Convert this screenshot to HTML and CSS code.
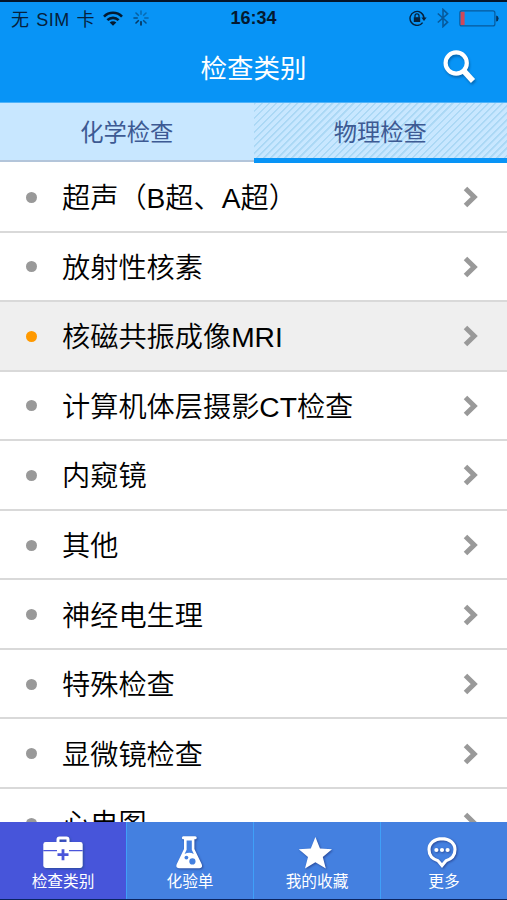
FILE: index.html
```html
<!DOCTYPE html>
<html lang="zh-CN">
<head>
    <meta charset="UTF-8">
    <meta name="viewport" content="width=device-width, initial-scale=1.0">
    <title>检查类别</title>
    <link rel="stylesheet" href="styles.css">
</head>
<body>
    <header>
        <div class="status">
            <div class="status-left">
                <span class="carrier">无 SIM 卡</span>
                <svg class="wifi" width="20" height="15" viewBox="0 0 20 15">
                    <g fill="none" stroke="currentColor" stroke-width="2.6">
                        <path d="M1 5.6a12.6 12.6 0 0 1 18 0"/>
                        <path d="M4.4 9.2a7.9 7.9 0 0 1 11.2 0"/>
                    </g>
                    <path d="M10 14.8L6.7 11.6a4.6 4.6 0 0 1 6.6 0z" fill="currentColor"/>
                </svg>
                <svg class="spinner" width="16" height="16" viewBox="-8 -8 16 16" stroke="currentColor" stroke-width="1.6" stroke-linecap="round">
                    <path d="M0-3.8V-7" opacity=".35"/>
                    <path d="M2.7-2.7L5-5" opacity=".35"/>
                    <path d="M3.8 0H7" opacity=".4"/>
                    <path d="M2.7 2.7L5 5" opacity=".6"/>
                    <path d="M0 3.8V7" opacity=".9"/>
                    <path d="M-2.7 2.7L-5 5" opacity=".8"/>
                    <path d="M-3.8 0H-7" opacity=".6"/>
                    <path d="M-2.7-2.7L-5-5" opacity=".45"/>
                </svg>
            </div>
            <time>16:34</time>
            <div class="status-right">
                <svg class="lock" width="18" height="16" viewBox="0 0 18 16">
                    <path d="M13.6 12.6A7 7 0 1 1 15 8" fill="none" stroke="currentColor" stroke-width="1.4"/>
                    <path d="M12.4 7.6H17.6L15 11z" fill="currentColor"/>
                    <rect x="4.8" y="7.2" width="6.4" height="4.8" fill="currentColor"/>
                    <path d="M6 7.4V5.8a2 2 0 0 1 4 0V7.4" fill="none" stroke="currentColor" stroke-width="1.3"/>
                </svg>
                <svg class="bluetooth" width="12" height="20" viewBox="0 0 12 20">
                    <path d="M.8 5.5L10.6 14.2 6 18.6V1.4L10.6 5.8.8 14.5" fill="none" stroke="currentColor" stroke-width="1.6"/>
                </svg>
                <svg class="battery" width="40" height="17" viewBox="0 0 40 17">
                    <rect x=".9" y=".9" width="35" height="15" rx="2" fill="none" stroke="#075a9c" stroke-width="1.2"/>
                    <rect x="1.6" y="1.8" width="4" height="13.2" fill="#d0485a"/>
                    <path d="M37.2 5.4q2.4.6 2.4 3.1t-2.4 3.1z" fill="#073158"/>
                </svg>
            </div>
        </div>
        <div class="title-bar">
            <h1>检查类别</h1>
            <svg class="search" width="36" height="38" viewBox="0 0 36 38">
                <circle cx="14.2" cy="14" r="10.6" fill="none" stroke="#fff" stroke-width="4.2"/>
                <path d="M21 21L31 32" stroke="#fff" stroke-width="5.6"/>
            </svg>
        </div>
    </header>

    <nav class="tabs">
        <a class="tab">化学检查</a>
        <a class="tab active">物理检查</a>
    </nav>

    <main>
        <ul class="list">
            <li><i class="dot"></i><span>超声（B超、A超）</span><svg class="arrow" viewBox="0 0 16 22"><path d="M2.5 2.5L11.2 11 2.5 19.5"/></svg></li>
            <li><i class="dot"></i><span>放射性核素</span><svg class="arrow" viewBox="0 0 16 22"><path d="M2.5 2.5L11.2 11 2.5 19.5"/></svg></li>
            <li class="selected"><i class="dot"></i><span>核磁共振成像MRI</span><svg class="arrow" viewBox="0 0 16 22"><path d="M2.5 2.5L11.2 11 2.5 19.5"/></svg></li>
            <li><i class="dot"></i><span>计算机体层摄影CT检查</span><svg class="arrow" viewBox="0 0 16 22"><path d="M2.5 2.5L11.2 11 2.5 19.5"/></svg></li>
            <li><i class="dot"></i><span>内窥镜</span><svg class="arrow" viewBox="0 0 16 22"><path d="M2.5 2.5L11.2 11 2.5 19.5"/></svg></li>
            <li><i class="dot"></i><span>其他</span><svg class="arrow" viewBox="0 0 16 22"><path d="M2.5 2.5L11.2 11 2.5 19.5"/></svg></li>
            <li><i class="dot"></i><span>神经电生理</span><svg class="arrow" viewBox="0 0 16 22"><path d="M2.5 2.5L11.2 11 2.5 19.5"/></svg></li>
            <li><i class="dot"></i><span>特殊检查</span><svg class="arrow" viewBox="0 0 16 22"><path d="M2.5 2.5L11.2 11 2.5 19.5"/></svg></li>
            <li><i class="dot"></i><span>显微镜检查</span><svg class="arrow" viewBox="0 0 16 22"><path d="M2.5 2.5L11.2 11 2.5 19.5"/></svg></li>
            <li><i class="dot"></i><span>心电图</span><svg class="arrow" viewBox="0 0 16 22"><path d="M2.5 2.5L11.2 11 2.5 19.5"/></svg></li>
        </ul>
    </main>

    <footer>
        <a class="item current">
            <svg width="40" height="34" viewBox="0 0 40 34">
                <path d="M15 7V3.6Q15 2 16.6 2H23.4Q25 2 25 3.6V7" fill="none" stroke="#fff" stroke-width="3"/>
                <rect x=".3" y="6" width="39.4" height="26" rx="2.4" fill="#fff"/>
                <path d="M.3 14.6H14M26 14.6H39.7" stroke="#4a55da" stroke-width="1.4"/>
                <path d="M20 13.2V24.2M14.5 18.7H25.5" stroke="#4a55da" stroke-width="2.8"/>
            </svg>
            <span>检查类别</span>
        </a>
        <a class="item">
            <svg width="40" height="34" viewBox="0 0 40 34">
                <path d="M13.4 1.7H25.2" stroke="#fff" stroke-width="3" stroke-linecap="round"/>
                <path d="M14 2H24.4V13L31.6 28Q33.2 32.2 29.2 32.2H9.2Q5.2 32.2 6.8 28L14 13z" fill="#fff"/>
                <path d="M16.6 4.4H21.8V13.8L23.8 18Q19.2 15.4 14.6 18L16.6 13.8z" fill="#4480e0"/>
                <circle cx="16.4" cy="21.6" r="1.9" fill="#4480e0"/>
                <circle cx="22.4" cy="25.4" r="3.1" fill="#4480e0"/>
            </svg>
            <span>化验单</span>
        </a>
        <a class="item">
            <svg width="40" height="34" viewBox="0 0 40 34">
                <path d="M18.4 1L23 12.4 35 13.2 25.8 21 28.8 32.6 18.4 26.2 8 32.6 11 21 1.8 13.2 13.8 12.4z" fill="#fff"/>
            </svg>
            <span>我的收藏</span>
        </a>
        <a class="item">
            <svg width="40" height="34" viewBox="0 0 40 34">
                <path d="M18 2.6C10.4 2.6 5 7.4 5 13.6 5 19.2 8.6 23.2 14 24.8L18 29.6 22 24.8C27.4 23.2 31 19.2 31 13.6 31 7.4 25.6 2.6 18 2.6z" fill="none" stroke="#fff" stroke-width="3.1"/>
                <g fill="#fff">
                    <circle cx="12.4" cy="14" r="2.1"/>
                    <circle cx="18" cy="14" r="2.1"/>
                    <circle cx="23.6" cy="14" r="2.1"/>
                </g>
            </svg>
            <span>更多</span>
        </a>
    </footer>
</body>
</html>
```
FILE: styles.css
```css
* {
    box-sizing: border-box;
    padding: 0;
    margin: 0;
}

:root {
    --blue: #0894f6;
    --bar: #4480e0;
    --bar-current: #4755da;
    --tab: #c8e7ff;
    --tab-text: #3d5a93;
    --line: #d9d9d9;
}

body {
    height: 900px;
    display: flex;
    flex-direction: column;
    overflow: hidden;
    background-color: white;
    font-family: "Liberation Sans", "Noto Sans CJK SC", sans-serif;
}

header {
    height: 102px;
    flex: none;
    border-top: 2px solid #04152a;
    background-color: var(--blue);
}

.status {
    display: grid;
    grid-template-columns: 1fr auto 1fr;
    align-items: center;
    height: 32px;
    padding: 0 9px 0 11px;
    color: #06213c;
}

.status-left, .status-right {
    display: flex;
    align-items: center;
}

.status-right {
    justify-content: flex-end;
    margin-right: -1px;
}

.carrier {
    font-size: 18px;
    letter-spacing: 0.5px;
    word-spacing: 1.3px;
    white-space: nowrap;
}

.wifi {
    margin-left: 8px;
    color: #041a30;
}

.spinner {
    margin-left: 10px;
}

time {
    margin: 0 1px 0 -1px;
    color: #041a30;
    font-size: 18px;
    font-weight: bold;
}

.bluetooth {
    margin: 0 10px;
    color: #075a9c;
}

.title-bar {
    display: grid;
    grid-template-columns: 1fr auto 1fr;
    align-items: center;
    height: 68px;
    padding-right: 29px;
    padding-left: 29px;
}

h1 {
    grid-column: 2;
    padding-bottom: 4px;
    color: white;
    font-size: 26.5px;
    font-weight: 400;
}

.search {
    justify-self: end;
    filter: drop-shadow(1px 2px 1px #0569b5);
}

.tabs {
    display: flex;
    flex: none;
    align-items: flex-start;
    height: 61px;
}

.tab {
    flex: 1;
    height: 60px;
    border-top: 1px solid #4fb3fa;
    border-bottom: 2px solid #b3c5da;
    background-color: var(--tab);
    color: var(--tab-text);
    font-size: 23.3px;
    font-weight: 400;
    line-height: 60px;
    text-align: center;
}

.tab.active {
    height: 61px;
    border-bottom: 5px solid var(--blue);
    background-image: repeating-linear-gradient(135deg, #abd8f5 0 1.2px, transparent 2px 5px);
}

main {
    flex: 1;
    overflow: hidden;
}

.list {
    list-style: none;
}

.list li {
    display: flex;
    align-items: center;
    height: 69.55px;
    padding: 1px 28px 0 26px;
    border-bottom: 2px solid var(--line);
    font-size: 28.2px;
    font-weight: 350;
}

.list span {
    flex: 1;
    margin-left: 25px;
    padding-top: 2px;
    line-height: 40px;
}

.dot {
    width: 11px;
    height: 11px;
    border-radius: 50%;
    background-color: #999;
}

.selected {
    background-color: #efefef;
}

.selected .dot {
    background-color: #ff9900;
}

.arrow {
    width: 16px;
    height: 22px;
    fill: none;
    stroke: #999;
    stroke-width: 5;
}

footer {
    display: flex;
    flex: none;
    height: 78px;
    border-bottom: 1px solid #0b2460;
}

.item {
    display: flex;
    flex: 1;
    flex-direction: column;
    align-items: center;
    padding-top: 14px;
    border-left: 1px solid #3fa0f8;
    background-color: var(--bar);
    color: white;
    font-size: 15.7px;
    line-height: 24px;
}

.item.current {
    border-left: 0;
    background-color: var(--bar-current);
}

.item svg {
    filter: drop-shadow(1px 1px 1px #2a4a9a);
}
```
